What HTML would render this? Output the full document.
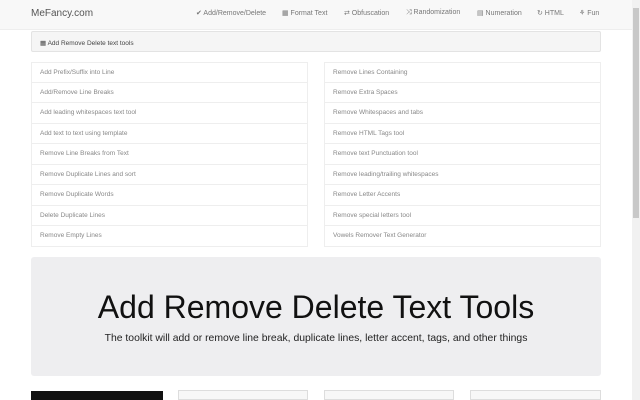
<!DOCTYPE html>
<html><head><style>
*{margin:0;padding:0;box-sizing:border-box}
body{width:640px;height:400px;overflow:hidden;background:#fff;font-family:"Liberation Sans",sans-serif;position:relative}
.nav{position:absolute;left:0;top:0;width:632px;height:30px;background:#f8f8f8;border-bottom:1px solid #eee}
.brand{position:absolute;left:31px;top:8px;font-size:10px;color:#555}
.nl{position:absolute;top:9px;font-size:7px;color:#777}
.ph{position:absolute;left:31px;top:31px;width:570px;height:21px;background:#f5f5f5;border:1px solid #e3e3e3;border-radius:2px;font-size:6.5px;color:#444;padding:7px 0 0 8px}
.col{position:absolute;top:62px;width:277px}
.it{height:20.5px;border:1px solid #eee;border-top:none;font-size:6.5px;color:#888;padding:6px 0 0 8px}
.it:first-child{border-top:1px solid #eee}
.jb{position:absolute;left:31px;top:257px;width:570px;height:119px;background:#eeeef0;border-radius:3px;text-align:center}
.jb h1{font-weight:normal;font-size:32px;color:#111;margin-top:32px}
.jb p{font-size:10.4px;color:#222;margin-top:7px}
.sb{position:absolute;right:0;top:0;width:8px;height:400px;background:#f1f1f1}
.th{position:absolute;right:1px;top:8px;width:6px;height:210px;background:#c8c8c8}
</style></head><body>
<div class="nav">
<div class="brand">MeFancy.com</div>
<div class="nl" style="left:196px">✔ Add/Remove/Delete</div>
<div class="nl" style="left:282px">▦ Format Text</div>
<div class="nl" style="left:344px">⇄ Obfuscation</div>
<div class="nl" style="left:406px">⤨ Randomization</div>
<div class="nl" style="left:477px">▤ Numeration</div>
<div class="nl" style="left:537px">↻ HTML</div>
<div class="nl" style="left:579px">⚘ Fun</div>
</div>
<div class="ph">▦ Add Remove Delete text tools</div>
<div class="col" style="left:31px">
<div class="it">Add Prefix/Suffix into Line</div>
<div class="it">Add/Remove Line Breaks</div>
<div class="it">Add leading whitespaces text tool</div>
<div class="it">Add text to text using template</div>
<div class="it">Remove Line Breaks from Text</div>
<div class="it">Remove Duplicate Lines and sort</div>
<div class="it">Remove Duplicate Words</div>
<div class="it">Delete Duplicate Lines</div>
<div class="it">Remove Empty Lines</div>
</div>
<div class="col" style="left:324px">
<div class="it">Remove Lines Containing</div>
<div class="it">Remove Extra Spaces</div>
<div class="it">Remove Whitespaces and tabs</div>
<div class="it">Remove HTML Tags tool</div>
<div class="it">Remove text Punctuation tool</div>
<div class="it">Remove leading/trailing whitespaces</div>
<div class="it">Remove Letter Accents</div>
<div class="it">Remove special letters tool</div>
<div class="it">Vowels Remover Text Generator</div>
</div>
<div class="jb"><h1>Add Remove Delete Text Tools</h1><p>The toolkit will add or remove line break, duplicate lines, letter accent, tags, and other things</p></div>
<div style="position:absolute;left:31px;top:391px;width:132px;height:9px;background:#111"></div>
<div style="position:absolute;left:178px;top:390px;width:130px;height:10px;background:#f7f7f7;border:1px solid #ddd"></div>
<div style="position:absolute;left:324px;top:390px;width:130px;height:10px;background:#f7f7f7;border:1px solid #ddd"></div>
<div style="position:absolute;left:470px;top:390px;width:131px;height:10px;background:#f7f7f7;border:1px solid #ddd"></div>
<div class="sb"><div class="th"></div></div>
</body></html>
